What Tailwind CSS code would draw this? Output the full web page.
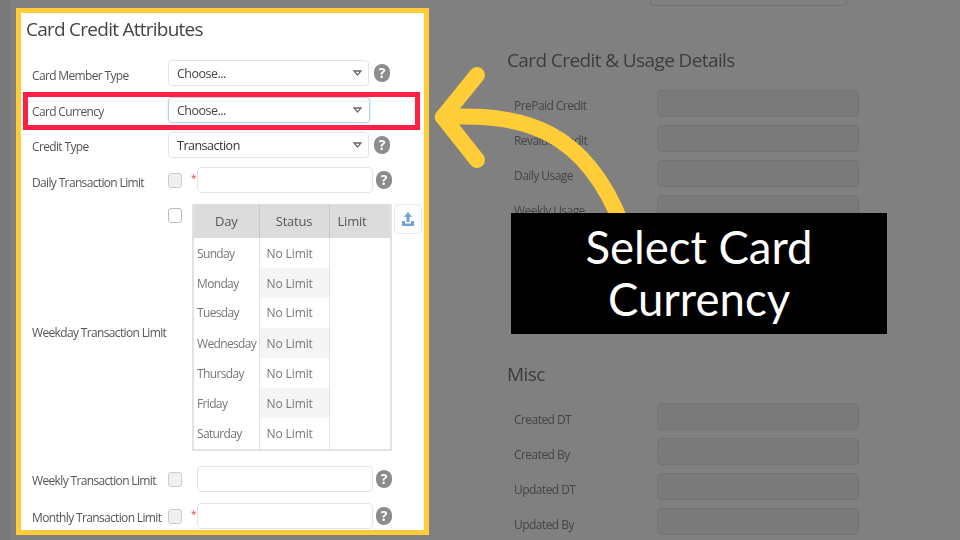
<!DOCTYPE html>
<html lang="en">
<head>
    <meta charset="UTF-8">
    <title>Card Credit Attributes</title>
    <script src="https://cdn.jsdelivr.net/npm/@tailwindcss/browser@4"></script>
</head>
<body class="bg-[#808080] font-['Open_Sans',sans-serif]">
    <div class="relative w-[960px] h-[540px] overflow-hidden flex items-start">
        <div class="w-[10px] h-full shrink-0 bg-[#787878]"></div>

        <!-- Left card -->
        <div class="ml-[6px] mt-2 w-[413px] h-[527px] shrink-0 border-[5px] border-[#ffcd38] bg-white">
            <div class="pl-[5px] pt-[4px] text-[#555] text-[12px] tracking-[-0.65px] whitespace-nowrap blur-[0.4px]">
                <h2 class="text-[19px] leading-6 text-[#444] tracking-[-0.75px]">Card Credit Attributes</h2>

                <div class="mt-[19px] flex items-center h-[26px] pl-[6px]">
                    <span class="w-[136px] mt-[6px]">Card Member Type</span>
                    <div class="w-[201px] h-[26px] pl-2 pr-[6px] flex items-center justify-between border border-[#e4e4e4] rounded-sm text-[#444] text-[12.500px] tracking-[-0.5px]"><span class="mt-[3px]">Choose...</span>
                        <svg class="w-[9px] h-[6px]" viewBox="0 0 9 6"><path d="M1 1h7L4.500 5z" fill="#fff" stroke="#666" stroke-width="1.300"/></svg>
                    </div>
                    <span class="ml-[5px] w-4 h-[18px] rounded-full bg-[#8c8c8c] text-white text-[14px] font-bold leading-[18px] text-center tracking-normal">?</span>
                </div>

                <div class="mt-[11px] flex items-center h-[26px] pl-[6px]">
                    <span class="w-[136px] mt-1">Card Currency</span>
                    <div class="w-[202px] h-[26px] pl-2 pr-[7px] flex items-center justify-between border border-[#bcd0ea] shadow-[0_0_2px_#bcd0ea] rounded-sm text-[#444] text-[12.500px] tracking-[-0.5px]"><span class="mt-[3px]">Choose...</span>
                        <svg class="w-[9px] h-[6px]" viewBox="0 0 9 6"><path d="M1 1h7L4.500 5z" fill="#fff" stroke="#666" stroke-width="1.300"/></svg>
                    </div>
                </div>

                <div class="mt-[9px] flex items-center h-[26px] pl-[6px]">
                    <span class="w-[136px] mt-1">Credit Type</span>
                    <div class="w-[201px] h-[26px] pl-2 pr-[6px] flex items-center justify-between border border-[#e4e4e4] rounded-sm text-[#333] text-[12.500px] tracking-[-0.5px]"><span class="mt-[3px]">Transaction</span>
                        <svg class="w-[9px] h-[6px]" viewBox="0 0 9 6"><path d="M1 1h7L4.500 5z" fill="#fff" stroke="#666" stroke-width="1.300"/></svg>
                    </div>
                    <span class="ml-[5px] w-4 h-[18px] rounded-full bg-[#8c8c8c] text-white text-[14px] font-bold leading-[18px] text-center tracking-normal">?</span>
                </div>

                <div class="mt-[9px] flex items-center h-[26px] pl-[6px]">
                    <span class="w-[136px] mt-[6px]">Daily Transaction Limit</span>
                    <span class="w-[14px] h-[15px] rounded-[3px] border border-[#ccc] bg-[#eef0f3]"></span>
                    <span class="w-[14px] pl-[9px] text-[#ef4444] text-[10px] self-start mt-1">*</span>
                    <div class="ml-[1px] w-[176px] h-[26px] border border-[#e4e4e4] rounded-sm"></div>
                    <span class="ml-[3px] w-4 h-[18px] rounded-full bg-[#8c8c8c] text-white text-[14px] font-bold leading-[18px] text-center tracking-normal">?</span>
                </div>

                <div class="mt-[11px] flex items-center pl-[6px]">
                    <span class="w-[136px] mt-[10px]">Weekday Transaction Limit</span>
                    <span class="self-start mt-1 w-[14px] h-[15px] rounded-[3px] border border-[#bbb] bg-white"></span>
                    <table class="ml-[10px] w-[200px] table-fixed border-collapse border-2 border-t-0 border-[#e2e2e2]">
                        <thead>
                            <tr class="h-[34px] bg-[#dcdcdc] text-[13px] tracking-[-0.2px] text-[#555]">
                                <th class="w-[66px] pt-[2px] font-normal border-r border-[#c8c8c8]">Day</th>
                                <th class="w-[70px] pt-[2px] font-normal border-r border-[#c8c8c8]">Status</th>
                                <th class="pt-[2px] font-normal text-left pl-2">Limit</th>
                            </tr>
                        </thead>
                        <tbody class="text-[#777] tracking-[-0.65px]">
                            <tr class="h-[30px]"><td class="pl-[3px] pt-[2px] border-r border-[#e2e2e2]">Sunday</td><td class="pl-[7px] pt-[2px] border-r border-[#e2e2e2] tracking-[-0.1px]">No Limit</td><td></td></tr>
                            <tr class="h-[30px]"><td class="pl-[3px] pt-[2px] border-r border-[#e2e2e2]">Monday</td><td class="pl-[7px] pt-[2px] border-r border-[#e2e2e2] tracking-[-0.1px] bg-[#f5f5f5]">No Limit</td><td></td></tr>
                            <tr class="h-[30px]"><td class="pl-[3px] border-r border-[#e2e2e2]">Tuesday</td><td class="pl-[7px] border-r border-[#e2e2e2] tracking-[-0.1px]">No Limit</td><td></td></tr>
                            <tr class="h-[30px]"><td class="pl-[3px] pt-[1px] border-r border-[#e2e2e2]">Wednesday</td><td class="pl-[7px] pt-[1px] border-r border-[#e2e2e2] tracking-[-0.1px] bg-[#f5f5f5]">No Limit</td><td></td></tr>
                            <tr class="h-[30px]"><td class="pl-[3px] pt-[1px] border-r border-[#e2e2e2]">Thursday</td><td class="pl-[7px] pt-[1px] border-r border-[#e2e2e2] tracking-[-0.1px]">No Limit</td><td></td></tr>
                            <tr class="h-[30px]"><td class="pl-[3px] pt-[1px] border-r border-[#e2e2e2]">Friday</td><td class="pl-[7px] pt-[1px] border-r border-[#e2e2e2] tracking-[-0.1px] bg-[#f5f5f5]">No Limit</td><td></td></tr>
                            <tr class="h-[32px]"><td class="pl-[3px] border-r border-[#e2e2e2]">Saturday</td><td class="pl-[7px] border-r border-[#e2e2e2] tracking-[-0.1px]">No Limit</td><td></td></tr>
                        </tbody>
                    </table>
                    <div class="self-start ml-[2px] w-[28px] h-[30px] flex items-center justify-center border border-[#e8e8e8] rounded-sm">
                        <svg class="w-[14px] h-[14px]" viewBox="0 0 14 14"><path d="M7 0L11 5H8.500V10H5.500V5H3z M1 9H4V11.500H10V9H13V14H1z" fill="#6ea3d4"/></svg>
                    </div>
                </div>

                <div class="mt-[15px] flex items-center h-[26px] pl-[6px]">
                    <span class="w-[136px] mt-[4px]">Weekly Transaction Limit</span>
                    <span class="w-[14px] h-[15px] rounded-[3px] border border-[#ccc] bg-[#eef0f3]"></span>
                    <div class="ml-[15px] w-[176px] h-[26px] border border-[#e4e4e4] rounded-sm"></div>
                    <span class="ml-[3px] w-4 h-[18px] rounded-full bg-[#8c8c8c] text-white text-[14px] font-bold leading-[18px] text-center tracking-normal">?</span>
                </div>

                <div class="mt-[11px] flex items-center h-[26px] pl-[6px]">
                    <span class="w-[136px] mt-[4px]">Monthly Transaction Limit</span>
                    <span class="w-[14px] h-[15px] rounded-[3px] border border-[#ccc] bg-[#eef0f3]"></span>
                    <span class="w-[14px] pl-[9px] text-[#ef4444] text-[10px] self-start mt-1">*</span>
                    <div class="ml-[1px] w-[176px] h-[26px] border border-[#e4e4e4] rounded-sm"></div>
                    <span class="ml-[3px] w-4 h-[18px] rounded-full bg-[#8c8c8c] text-white text-[14px] font-bold leading-[18px] text-center tracking-normal">?</span>
                </div>
            </div>
        </div>

        <!-- Right column -->
        <div class="ml-[78px] w-[352px] text-[12px] text-[#444] tracking-[-0.55px] whitespace-nowrap blur-[0.4px]">
            <div class="ml-[143px] w-[197px] h-[6px] border border-t-0 border-[#707070] rounded-b-sm"></div>
            <h2 class="mt-[42px] text-[19px] leading-6 text-[#3c3c3c] tracking-[-0.6px]">Card Credit &amp; Usage Details</h2>
            <div class="mt-[18px] pl-[7px] flex flex-col gap-2">
                <div class="flex items-center h-[27px]"><span class="w-[143px] mt-[5px]">PrePaid Credit</span><div class="w-[202px] h-[27px] bg-[#7a7a7a] border border-[#737373] rounded-sm"></div></div>
                <div class="flex items-center h-[27px]"><span class="w-[143px] mt-[5px]">Revalue Credit</span><div class="w-[202px] h-[27px] bg-[#7a7a7a] border border-[#737373] rounded-sm"></div></div>
                <div class="flex items-center h-[27px]"><span class="w-[143px] mt-[5px]">Daily Usage</span><div class="w-[202px] h-[27px] bg-[#7a7a7a] border border-[#737373] rounded-sm"></div></div>
                <div class="flex items-center h-[27px]"><span class="w-[143px] mt-[5px]">Weekly Usage</span><div class="w-[202px] h-[27px] bg-[#7a7a7a] border border-[#737373] rounded-sm"></div></div>
            </div>
            <h2 class="mt-[140px] text-[19px] leading-6 text-[#3c3c3c] tracking-[-0.6px]">Misc</h2>
            <div class="mt-[17px] pl-[7px] flex flex-col gap-2">
                <div class="flex items-center h-[27px]"><span class="w-[143px] mt-[7px]">Created DT</span><div class="w-[202px] h-[27px] bg-[#7a7a7a] border border-[#737373] rounded-sm"></div></div>
                <div class="flex items-center h-[27px]"><span class="w-[143px] mt-[7px]">Created By</span><div class="w-[202px] h-[27px] bg-[#7a7a7a] border border-[#737373] rounded-sm"></div></div>
                <div class="flex items-center h-[27px]"><span class="w-[143px] mt-[7px]">Updated DT</span><div class="w-[202px] h-[27px] bg-[#7a7a7a] border border-[#737373] rounded-sm"></div></div>
                <div class="flex items-center h-[27px]"><span class="w-[143px] mt-[7px]">Updated By</span><div class="w-[202px] h-[27px] bg-[#7a7a7a] border border-[#737373] rounded-sm"></div></div>
            </div>
        </div>

        <!-- Red highlight -->
        <div class="absolute left-[23px] top-[92px] w-[397px] h-[38px] border-[5px] border-[#ff1f47]"></div>

        <!-- Arrow -->
        <svg class="absolute left-0 top-0 w-[960px] h-[540px]" viewBox="0 0 960 540" fill="none" stroke="#ffcd38" stroke-width="16" stroke-linecap="round" stroke-linejoin="round">
            <path d="M443 117C525 113 585 130 622 225"/>
            <path d="M477 75L443 117L477 160"/>
        </svg>

        <!-- Callout -->
        <div class="absolute left-[511px] top-[213px] w-[376px] h-[121px] pb-[1px] bg-black text-white font-['Lato',sans-serif] text-[45.500px] leading-[52px] text-center flex items-center justify-center">Select Card<br>Currency</div>
    </div>
</body>
</html>
